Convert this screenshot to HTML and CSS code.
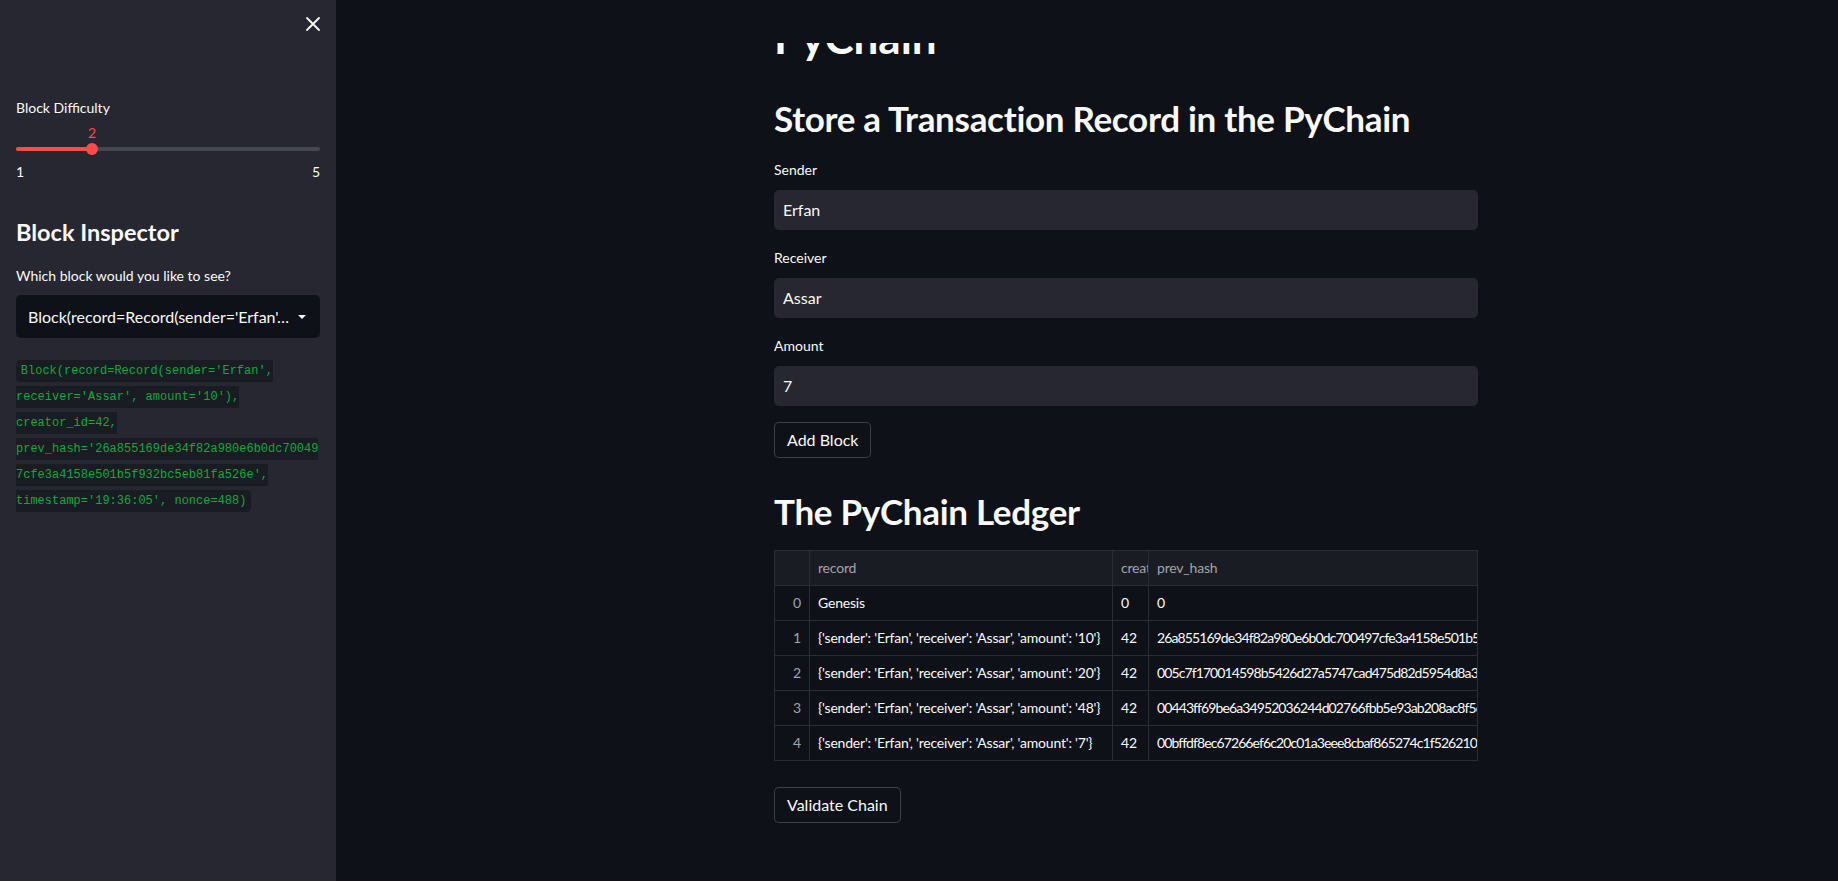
FILE: index.html
```html
<!DOCTYPE html>
<html lang="en">
<head>
<meta charset="utf-8">
<title>PyChain</title>
<link rel="stylesheet" href="styles.css">
</head>
<body>
<div class="app">
  <aside class="sidebar">
    <div class="sb-top">
      <button class="close" aria-label="Close sidebar">
        <svg width="24" height="24" viewBox="0 0 24 24" fill="none" stroke="currentColor" stroke-width="1.8" stroke-linecap="round"><path d="M6 6l12 12M18 6L6 18"/></svg>
      </button>
    </div>
    <div class="sb-content">
      <div class="w-label slider-label">Block Difficulty</div>
      <div class="slider-value-row"><span class="slider-value" style="left:25%">2</span></div>
      <div class="track"><div class="fill" style="width:25%"></div><div class="thumb" style="left:25%"></div></div>
      <div class="minmax"><span>1</span><span>5</span></div>

      <h2 class="sb-h">Block Inspector</h2>
      <div class="w-label which">Which block would you like to see?</div>
      <div class="select">
        <span class="select-text">Block(record=Record(sender='Erfan'…</span>
        <svg class="caret" width="8" height="4" viewBox="0 0 8 4"><path d="M0 0h8L4 4z" fill="#fafafa"/></svg>
      </div>
      <p class="code-p"><code>Block(record=Record(sender='Erfan', receiver='Assar', amount='10'), creator_id=42, prev_hash='26a855169de34f82a980e6b0dc700497cfe3a4158e501b5f932bc5eb81fa526e', timestamp='19:36:05', nonce=488)</code></p>
    </div>
  </aside>

  <main class="main">
    <div class="topbar"></div>
    <div class="block">
      <h1 class="h1">PyChain</h1>
      <h2 class="h2 h-store">Store a Transaction Record in the PyChain</h2>

      <label class="f-label first">Sender</label>
      <input class="f-input" value="Erfan">
      <label class="f-label">Receiver</label>
      <input class="f-input" value="Assar">
      <label class="f-label">Amount</label>
      <input class="f-input" value="7">
      <button class="btn btn-add">Add Block</button>

      <h2 class="h2 h-ledger">The PyChain Ledger</h2>

      <div class="tbl-wrap">
        <div class="tbl">
          <div class="c hd"></div><div class="c hd">record</div><div class="c hd">creator_id</div><div class="c hd">prev_hash</div>
          <div class="c idx">0</div><div class="c">Genesis</div><div class="c">0</div><div class="c hash">0</div>
          <div class="c idx">1</div><div class="c">{'sender': 'Erfan', 'receiver': 'Assar', 'amount': '10'}</div><div class="c">42</div><div class="c hash">26a855169de34f82a980e6b0dc700497cfe3a4158e501b5f932bc5eb81fa526e</div>
          <div class="c idx">2</div><div class="c">{'sender': 'Erfan', 'receiver': 'Assar', 'amount': '20'}</div><div class="c">42</div><div class="c hash">005c7f170014598b5426d27a5747cad475d82d5954d8a3e1c09b7a2f4d6e8b13</div>
          <div class="c idx">3</div><div class="c">{'sender': 'Erfan', 'receiver': 'Assar', 'amount': '48'}</div><div class="c">42</div><div class="c hash">00443ff69be6a34952036244d02766fbb5e93ab208ac8f5c2e7d19a04b6f3e85</div>
          <div class="c idx last">4</div><div class="c last">{'sender': 'Erfan', 'receiver': 'Assar', 'amount': '7'}</div><div class="c last">42</div><div class="c hash last">00bffdf8ec67266ef6c20c01a3eee8cbaf865274c1f5262107d3a9e4b8c21f60</div>
        </div>
      </div>

      <button class="btn btn-validate">Validate Chain</button>
    </div>
  </main>
</div>
</body>
</html>
```

FILE: styles.css
```css
* { box-sizing: border-box; }

html, body {
  margin: 0;
  height: 100%;
  overflow: hidden;
}

body {
  background: #0e1117;
  color: #fafafa;
  font-family: Lato, "Noto Sans", sans-serif;
}

.app {
  display: flex;
  height: 100vh;
  overflow: hidden;
}

/* ---------- sidebar ---------- */
.sidebar {
  flex: 0 0 336px;
  width: 336px;
  background: #262730;
  display: flex;
  flex-direction: column;
  position: relative;
  z-index: 3;
}

.sb-top {
  display: flex;
  justify-content: flex-end;
  padding: 12px 11px 0 0;
}

.close {
  width: 24px;
  height: 24px;
  padding: 0;
  border: 0;
  background: none;
  color: #fafafa;
  display: flex;
}

.sb-content {
  padding: 0 16px;
  display: flex;
  flex-direction: column;
}

.w-label {
  font-size: 14px;
  line-height: 22px;
}

.slider-label { margin-top: 61px; }

.slider-value-row {
  position: relative;
  height: 22px;
  margin-top: 3px;
}

.slider-value {
  position: absolute;
  top: 0;
  transform: translateX(-50%);
  font-size: 14px;
  line-height: 22px;
  color: #ff4b4b;
}

.track {
  position: relative;
  height: 4px;
  margin-top: 3px;
  background: #45474f;
  border-radius: 2px;
}

.fill {
  position: absolute;
  left: 0;
  top: 0;
  bottom: 0;
  background: #ff4b4b;
  border-radius: 2px;
}

.thumb {
  position: absolute;
  top: 50%;
  width: 12px;
  height: 12px;
  border-radius: 50%;
  background: #ff4b4b;
  transform: translate(-50%, -50%);
}

.minmax {
  display: flex;
  justify-content: space-between;
  margin-top: 10px;
  font-size: 14px;
  line-height: 22px;
}

.sb-h {
  margin: 34px 0 0;
  font-size: 23.5px;
  line-height: 30px;
  font-weight: 700;
}

.which { margin-top: 18px; }

.select {
  margin-top: 8px;
  height: 43px;
  background: #0e1117;
  border-radius: 5px;
  display: flex;
  align-items: center;
  justify-content: space-between;
  padding: 0 14px 0 12px;
  font-size: 16px;
}

.select-text {
  white-space: nowrap;
  overflow: hidden;
  text-overflow: ellipsis;
}

.caret { flex: 0 0 auto; }

.code-p {
  margin: 17px 0 0;
  font-size: 16px;
  line-height: 26px;
  overflow-wrap: break-word;
}

.code-p code {
  font-family: "Liberation Mono", "DejaVu Sans Mono", monospace;
  font-size: 12px;
  line-height: 1;
  color: #09ab3b;
  background: #1a1c24;
  padding: 4px 4.8px;
  border-radius: 4px;
}

/* ---------- main ---------- */
.main {
  flex: 1;
  position: relative;
  overflow: hidden;
  padding-left: 78px;
}

.topbar {
  position: absolute;
  top: 0;
  left: 0;
  right: 0;
  height: 43px;
  background: #0e1117;
  z-index: 2;
}

.block {
  width: 704px;
  margin: 0 auto;
  padding-top: 11px;
  display: flex;
  flex-direction: column;
}

.h1 {
  margin: 0;
  font-size: 44px;
  line-height: 52.8px;
  font-weight: 700;
}

.h2 {
  margin: 0;
  font-size: 35px;
  line-height: 42px;
  font-weight: 700;
  letter-spacing: -0.3px;
}

.h-store { margin-top: 33.7px; }

.f-label {
  font-size: 14px;
  line-height: 24px;
  margin-top: 16px;
}

.f-label.first { margin-top: 18.5px; }

.f-input {
  margin-top: 8px;
  height: 40px;
  width: 100%;
  background: #262730;
  border: 1px solid transparent;
  border-radius: 5px;
  color: #fafafa;
  font-family: inherit;
  font-size: 16px;
  padding: 0 8px;
  outline: none;
}

.btn {
  align-self: flex-start;
  height: 36px;
  padding: 0 12px;
  background: #0e1117;
  border: 1px solid rgba(250, 250, 250, 0.2);
  border-radius: 5px;
  color: #fafafa;
  font-family: inherit;
  font-size: 16px;
}

.btn-add { margin-top: 16px; }

.h-ledger { margin-top: 32.5px; }

.tbl-wrap {
  margin-top: 17.5px;
  width: 704px;
  border: 1px solid #2b2d33;
  overflow: hidden;
}

.tbl {
  display: grid;
  grid-template-columns: 35px 303px 36px 640px;
  width: max-content;
}

.c {
  height: 35px;
  line-height: 34px;
  padding: 0 8px;
  border-right: 1px solid #2b2d33;
  border-bottom: 1px solid #2b2d33;
  font-size: 14px;
  letter-spacing: -0.2px;
  white-space: nowrap;
  overflow: hidden;
}

.c.hash { letter-spacing: -0.9px; }

.c.last {
  border-bottom: 0;
  height: 34px;
}

.hd {
  background: #1a1c24;
  color: #a1a4ab;
}

.idx {
  text-align: right;
  color: #a1a4ab;
}

.btn-validate { margin-top: 26px; }
```
